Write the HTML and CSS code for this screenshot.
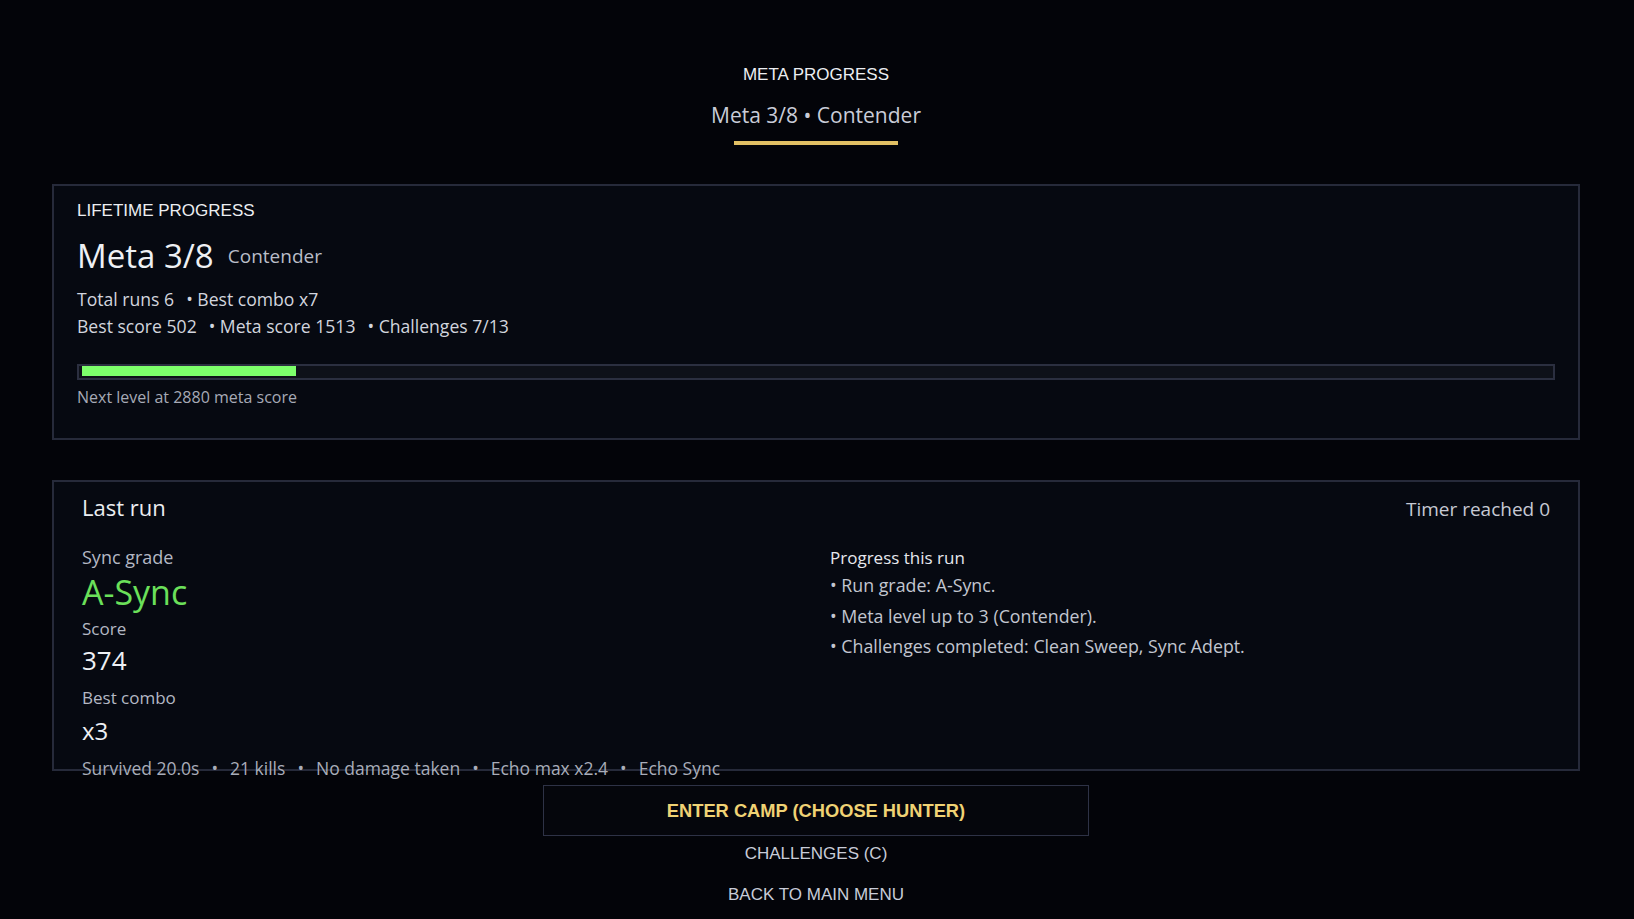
FILE: index.html
```html
<!DOCTYPE html>
<html lang="en">
<head>
  <meta charset="UTF-8" />
  <meta name="viewport" content="width=device-width, initial-scale=1.0"/>
  <title>Meta Progress</title>
  <link rel="stylesheet" href="styles.css">
</head>
<body>
  <div class="screen">
    <header class="meta-head">
      <h1 class="caps-title">META PROGRESS</h1>
      <div class="meta-sub">Meta 3/8 • Contender</div>
      <div class="meta-underline"></div>
    </header>

    <section class="panel lifetime">
      <h2 class="caps-title lifetime-title">LIFETIME PROGRESS</h2>
      <div class="level-row">
        <span class="level">Meta 3/8</span>
        <span class="rank">Contender</span>
      </div>
      <div class="stat-line">Total runs 6<span class="sep">• Best combo x7</span></div>
      <div class="stat-line">Best score 502<span class="sep">• Meta score 1513</span><span class="sep">• Challenges 7/13</span></div>
      <div class="bar">
        <div class="bar-fill" style="width: 14.6%"></div>
      </div>
      <div class="bar-note">Next level at 2880 meta score</div>
    </section>

    <section class="panel last-run">
      <div class="run-head">
        <h3 class="run-title">Last run</h3>
        <span class="run-end">Timer reached 0</span>
      </div>
      <div class="run-grid">
        <div class="run-stats">
          <div class="label">Sync grade</div>
          <div class="grade">A-Sync</div>
          <div class="label score-label">Score</div>
          <div class="value score">374</div>
          <div class="label combo-label">Best combo</div>
          <div class="value combo">x3</div>
          <div class="run-line">Survived 20.0s<span class="dot">•</span>21 kills<span class="dot">•</span>No damage taken<span class="dot">•</span>Echo max x2.4<span class="dot">•</span>Echo Sync</div>
        </div>
        <div class="run-progress">
          <div class="progress-title">Progress this run</div>
          <ul class="progress-list">
            <li>• Run grade: A-Sync.</li>
            <li>• Meta level up to 3 (Contender).</li>
            <li>• Challenges completed: Clean Sweep, Sync Adept.</li>
          </ul>
        </div>
      </div>
    </section>

    <nav class="menu">
      <button class="menu-main">ENTER CAMP (CHOOSE HUNTER)</button>
      <button class="menu-link">CHALLENGES (C)</button>
      <button class="menu-link back">BACK TO MAIN MENU</button>
    </nav>
  </div>
</body>
</html>
```

FILE: styles.css
```css
* {
  margin: 0; padding: 0; box-sizing: border-box;
}

body {
  background: #030409;
  color: #e8eaf0;
  font-family: 'Open Sans', 'Noto Sans', sans-serif;
  overflow: hidden;
}

.screen {
  height: 919px;
  padding: 65px 54px 0 52px;
}

/* header */

.meta-head {
  display: flex;
  flex-direction: column;
  align-items: center;
}

.caps-title {
  font-family: 'Liberation Sans', Arial, sans-serif;
  font-weight: normal;
  font-size: 17px;
  line-height: 19px;
  color: #eceef2;
}

.meta-sub {
  margin-top: 18px;
  font-size: 21px;
  line-height: 27px;
  color: #c9ccd8;
}

.meta-underline {
  width: 164px;
  height: 4px;
  margin-top: 12px;
  background: #e2c064;
}

/* panels */

.panel {
  background: #060911;
  border: 2px solid #262a3a;
}

.lifetime {
  margin-top: 39px;
  padding: 15px 23px 31px;
}

.lifetime-title {
  font-size: 17px;
  line-height: 20px;
}

.level-row {
  display: flex;
  align-items: center;
  gap: 14px;
  margin-top: 15px;
  line-height: 40px;
}

.level {
  font-size: 33px;
  color: #eef0f4;
}

.rank {
  font-size: 19px;
  color: #b9bdc8;
}

.stat-line {
  font-size: 17.6px;
  line-height: 27px;
  color: #d2d5de;
}

.level-row + .stat-line {
  margin-top: 10px;
}

.sep {
  margin-left: 12px;
}

.bar {
  height: 16px;
  margin-top: 24px;
  padding: 0 3px;
  background: #0e1119;
  border: 2px solid #2b2f40;
}

.bar-fill {
  height: 10px;
  background: #7dff6b;
}

.bar-note {
  margin-top: 7px;
  font-size: 16px;
  line-height: 20px;
  color: #a6aab6;
}

.last-run {
  height: 291px;
  margin-top: 40px;
  padding: 10px 28px 0;
}

.run-head {
  display: flex;
  justify-content: space-between;
  align-items: baseline;
}

.run-title {
  font-size: 22px;
  line-height: 30px;
  font-weight: normal;
  color: #eceef2;
}

.run-end {
  font-size: 19px;
  color: #c6c9d4;
}

.run-grid {
  display: grid;
  grid-template-columns: 1fr 1fr;
  gap: 28px;
  margin-top: 23px;
}

.label {
  font-size: 18px;
  line-height: 24px;
  color: #b4b8c4;
}

.grade {
  margin-top: 3px;
  font-size: 34px;
  line-height: 40px;
  color: #6be05a;
}

.score-label {
  margin-top: 5px;
  font-size: 17px;
}

.value {
  color: #eef0f4;
}

.score {
  margin-top: 2px;
  font-size: 26px;
  line-height: 34px;
}

.combo-label {
  margin-top: 9px;
  font-size: 17px;
}

.combo {
  margin-top: 5px;
  font-size: 24px;
  line-height: 32px;
}

.run-line {
  margin-top: 9px;
  font-size: 17.5px;
  line-height: 24px;
  color: #a9adb9;
  white-space: nowrap;
}

.dot {
  padding: 0 12px;
}

.progress-title {
  margin-top: 1px;
  font-size: 17px;
  line-height: 24px;
  color: #e6e8ee;
}

.progress-list {
  list-style: none;
  font-size: 17.8px;
  line-height: 30.5px;
  color: #c2c6d0;
}

/* menu */

.menu {
  display: flex;
  flex-direction: column;
  align-items: center;
  margin-top: 14px;
}

.menu button {
  font-family: 'Liberation Sans', Arial, sans-serif;
  background: none;
  border: none;
  cursor: pointer;
}

.menu .menu-main {
  width: 546px;
  height: 51px;
  background: #05060c;
  border: 1px solid #2e3246;
  color: #f0d274;
  font-size: 18.3px;
  font-weight: bold;
}

.menu-link {
  font-size: 17px;
  line-height: 20px;
  color: #c8ccd8;
  margin-top: 8px;
}

.menu-link.back {
  margin-top: 21px;
}
```
